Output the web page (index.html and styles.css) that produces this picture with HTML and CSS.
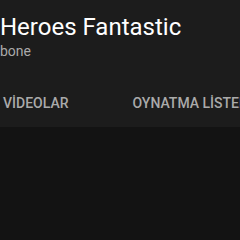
FILE: index.html
```html
<!DOCTYPE html>
<html lang="tr">
<head>
  <meta charset="UTF-8" />
  <meta name="viewport" content="width=device-width, initial-scale=1.0" />
  <title>Heroes Fantastic</title>
  <link rel="stylesheet" href="styles.css">
</head>
<body>
  <div class="channel-header">
    <div class="channel-info">
      <h1 class="channel-name">Heroes Fantastic</h1>
      <p class="channel-sub">bone</p>
    </div>
    <div class="tabs">
      <div class="tab">VİDEOLAR</div>
      <div class="tab">OYNATMA LİSTELERİ</div>
      <div class="tab">KANALLAR</div>
    </div>
  </div>
  <div class="content"></div>
</body>
</html>
```

FILE: styles.css
```css
:root {
  --header-bg: #1c1c1c;
  --page-bg: #131313;
  --text-primary: #fff;
  --text-secondary: #aaa;
}
* {
  margin: 0;
  padding: 0;
  box-sizing: border-box;
  font-family: 'Roboto', 'Liberation Sans', sans-serif;
}
html, body {
  height: 100%;
  overflow: hidden;
}
body {
  background-color: var(--page-bg);
  display: flex;
  flex-direction: column;
}
.channel-header {
  background-color: var(--header-bg);
  padding-top: 12px;
}
.channel-info {
  height: 68px;
}
.channel-name {
  font-size: 24px;
  line-height: 30px;
  font-weight: 400;
  color: var(--text-primary);
  white-space: nowrap;
}
.channel-sub {
  font-size: 14px;
  line-height: 18px;
  color: var(--text-secondary);
  white-space: nowrap;
}
.tabs {
  display: flex;
  gap: 64px;
  padding-left: 3px;
  height: 47px;
  overflow: hidden;
}
.tab {
  font-size: 14px;
  font-weight: 500;
  line-height: 47px;
  color: var(--text-secondary);
  white-space: nowrap;
  flex-shrink: 0;
}
.content {
  flex: 1;
}
```
